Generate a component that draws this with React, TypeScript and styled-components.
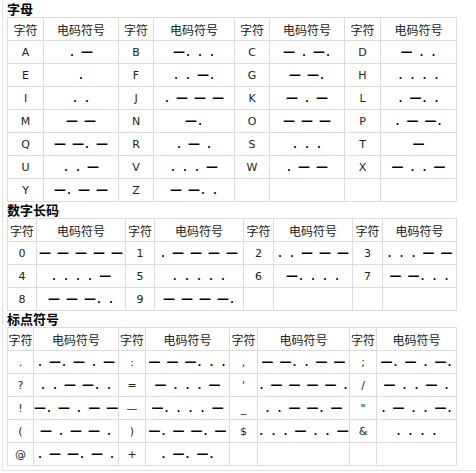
import React from "react";
import styled, { createGlobalStyle } from "styled-components";

type Pair = [string, string];

const letterRows: Pair[][] = [
  [["A", ". —"], ["B", "—. . ."], ["C", "— . —."], ["D", "— . ."]],
  [["E", "."], ["F", ". . —."], ["G", "— —."], ["H", ". . . ."]],
  [["I", ". ."], ["J", ". — — —"], ["K", "— . —"], ["L", ". —. ."]],
  [["M", "— —"], ["N", "—."], ["O", "— — —"], ["P", ". — —."]],
  [["Q", "— —. —"], ["R", ". — ."], ["S", ". . ."], ["T", "—"]],
  [["U", ". . —"], ["V", ". . . —"], ["W", ". — —"], ["X", "— . . —"]],
  [["Y", "—. — —"], ["Z", "— —. ."], ["", ""], ["", ""]],
];

const numberRows: Pair[][] = [
  [["0", "— — — — —"], ["1", ". — — — —"], ["2", ". . — — —"], ["3", ". . . — —"]],
  [["4", ". . . . —"], ["5", ". . . . ."], ["6", "—. . . ."], ["7", "— —. . ."]],
  [["8", "— — —. ."], ["9", "— — — —."], ["", ""], ["", ""]],
];

const punctRows: Pair[][] = [
  [[".", ". —. — . —"], [":", "— — —. . ."], [",", "— —. . — —"], [";", "—. — . —."]],
  [["?", ". . — —. ."], ["=", "— . . . —"], ["'", ". — — — — ."], ["/", "— . . — ."]],
  [["!", "—. — . — —"], ["—", "—. . . . —"], ["_", ". . — —. —"], ["\"", ". — . . —."]],
  [["(", "— . — — ."], [")", "—. — —. —"], ["$", ". . . — . . —"], ["&", ". . . ."]],
  [["@", ". — —. — ."], ["+", ". —. —."], ["", ""], ["", ""]],
];

const sections = [
  { title: "字母", widths: [36, 75, 35, 81, 35, 75, 36, 76], rows: letterRows },
  { title: "数字长码", widths: [29, 89, 29, 89, 30, 79, 30, 74], rows: numberRows },
  { title: "标点符号", widths: [26, 85, 27, 84, 28, 92, 27, 80], rows: punctRows },
];

const GlobalStyle = createGlobalStyle`
  html, body {
    margin: 0;
    padding: 0;
    background: #ffffff;
  }
  body {
    font-family: "Liberation Sans", "Noto Sans CJK SC", sans-serif;
    font-size: 12px;
    color: #000000;
  }
`;

const Frame = styled.div`
  margin-left: 2px;
  padding: 1px 0 4px 4px;
  border-left: 1px solid #e2e2e2;
  border-bottom: 1px solid #e2e2e2;
`;

const Title = styled.div`
  height: 16px;
  line-height: 16px;
  font-family: "Noto Sans CJK SC", sans-serif;
  font-size: 13px;
  font-weight: 700;
  color: #000000;
`;

const Table = styled.table`
  border-collapse: collapse;
  table-layout: fixed;
  width: 450px;
`;

const Col = styled.col<{ $w: number }>`
  width: ${(p) => p.$w}px;
`;

const Cell = styled.td<{ $head?: boolean }>`
  height: 22px;
  padding: 0;
  border: 1px solid #dcdcdc;
  text-align: center;
  white-space: nowrap;
  font-family: ${(p) =>
    p.$head
      ? `"Noto Sans CJK SC", sans-serif`
      : `"DejaVu Sans", "Noto Sans CJK SC", sans-serif`};
  font-size: ${(p) => (p.$head ? 12 : 11)}px;
  color: #222222;
`;

const CodeCell = styled.td`
  height: 22px;
  padding: 0;
  border: 1px solid #dcdcdc;
  text-align: center;
  white-space: pre;
  font-family: "DejaVu Sans Mono", "Liberation Mono", monospace;
  font-size: 10px;
  font-weight: 700;
  color: #000000;
`;

const Dash = styled.span`
  font-family: "DejaVu Sans", sans-serif;
  font-size: 12px;
  font-weight: 700;
  color: #000000;
`;

const Morse = ({ code }: { code: string }) => (
  <>
    {code.split("").map((c, i) => (c === "—" ? <Dash key={i}>—</Dash> : c))}
  </>
);

const Section = ({ title, widths, rows }: { title: string; widths: number[]; rows: Pair[][] }) => (
  <>
    <Title>{title}</Title>
    <Table>
      <colgroup>
        {widths.map((w, i) => (
          <Col key={i} $w={w} />
        ))}
      </colgroup>
      <tbody>
        <tr>
          {[0, 1, 2, 3].map((i) => (
            <React.Fragment key={i}>
              <Cell $head>字符</Cell>
              <Cell $head>电码符号</Cell>
            </React.Fragment>
          ))}
        </tr>
        {rows.map((row, r) => (
          <tr key={r}>
            {row.map(([ch, code], i) => (
              <React.Fragment key={i}>
                <Cell>{ch}</Cell>
                <CodeCell>
                  <Morse code={code} />
                </CodeCell>
              </React.Fragment>
            ))}
          </tr>
        ))}
      </tbody>
    </Table>
  </>
);

export default function App() {
  return (
    <>
      <GlobalStyle />
      <Frame>
        {sections.map((s) => (
          <Section key={s.title} {...s} />
        ))}
      </Frame>
    </>
  );
}
